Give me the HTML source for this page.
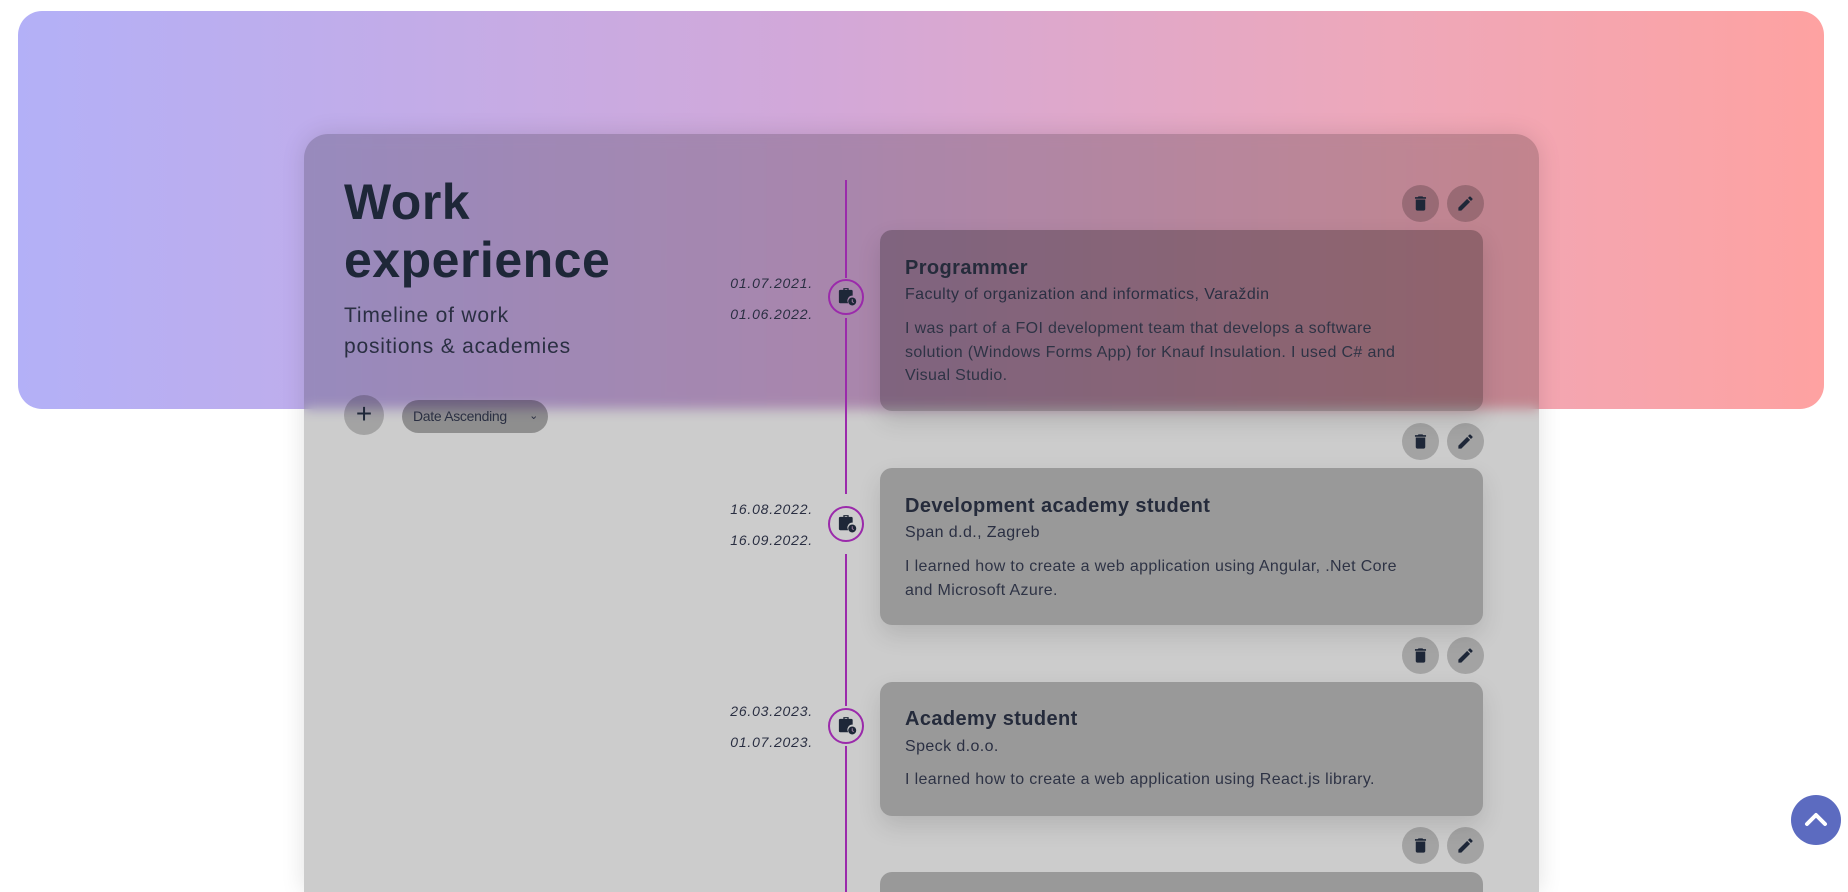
<!DOCTYPE html>
<html><head><meta charset="utf-8">
<style>
*{margin:0;padding:0;box-sizing:border-box}
html,body{width:1848px;height:892px;overflow:hidden;background:#fff;font-family:"Liberation Sans",sans-serif}
.hdr{position:absolute;left:18px;top:11px;width:1806px;height:398px;border-radius:24px;background:linear-gradient(90deg,#b3b0f7 0%,#d3a8d8 45%,#eda8bb 75%,#fea2a1 100%)}
.card{position:absolute;left:304px;top:134px;width:1235px;height:758px;border-radius:24px 24px 0 0;background:rgba(0,0,0,0.2);backdrop-filter:blur(6px);box-shadow:0 0 24px rgba(0,0,0,0.12)}
.abs{position:absolute}
.title{left:344px;top:173px;font-size:50px;line-height:58px;font-weight:700;color:#1e2738;letter-spacing:0.5px}
.sub{left:344px;top:300px;font-size:21px;line-height:31px;color:#2a2f42;letter-spacing:0.8px}
.plus{left:344px;top:395px;width:40px;height:40px;border-radius:50%;background:rgba(0,0,0,0.2);color:#1e2738;font-size:28px;line-height:38px;text-align:center}
.sel{left:402px;top:400px;width:146px;height:33px;border-radius:17px;background:rgba(0,0,0,0.3);color:#2a2f42;font-size:14px;line-height:33px;padding-left:11px;letter-spacing:-0.3px}
.sel span{position:absolute;right:10px;top:0;font-size:11px}
.line{left:845px;width:2px;background:#9b2aab}
.ic{width:36px;height:36px;left:828px;border:2px solid #9b2aab;border-radius:50%}
.date{right:1035px;font-size:14px;font-style:italic;color:#2a2f42;letter-spacing:0.8px;text-align:right}
.it{background:rgba(0,0,0,0.25);border-radius:12px;left:880px;width:603px;box-shadow:0 10px 24px rgba(0,0,0,0.12)}
.btn{width:37px;height:37px;border-radius:50%;background:rgba(0,0,0,0.2)}
.t{left:905px;font-size:20px;font-weight:700;color:#252b3b;letter-spacing:0.4px;white-space:nowrap}
.s{left:905px;font-size:16px;color:#2a2f42;letter-spacing:0.4px;white-space:nowrap}
.d{left:905px;font-size:16px;line-height:23.5px;color:#2e3345;letter-spacing:0.35px;white-space:nowrap}
.up{left:1791px;top:795px;width:50px;height:50px;border-radius:50%;background:#5c6bc0}
</style></head><body>
<div class="hdr"></div>
<div class="card"></div>
<div class="abs title">Work<br>experience</div>
<div class="abs sub">Timeline of work<br>positions &amp; academies</div>
<div class="abs plus">+</div>
<div class="abs sel">Date Ascending<span>&#8964;</span></div>

<div class="abs line" style="top:180px;height:98px"></div>
<div class="abs line" style="top:318px;height:176px"></div>
<div class="abs line" style="top:554px;height:152px"></div>
<div class="abs line" style="top:746px;height:146px"></div>

<svg width="0" height="0" style="position:absolute"><defs>
<symbol id="bc" viewBox="0 0 36 36"><path d="M15 10v-2h6v2h3a1.5 1.5 0 0 1 1.5 1.5v5a5.5 5.5 0 0 0-5 8.5H11.5A1.5 1.5 0 0 1 10 23.5v-12A1.5 1.5 0 0 1 11.5 10zm1.5 0h3V9.2h-3z" fill="#1e2738"/><circle cx="25" cy="23" r="4.5" fill="#1e2738"/><path d="M25 20.5v2.8l1.6 1.2" stroke="#b08aae" stroke-width="1" fill="none"/></symbol>
<symbol id="tr" viewBox="0 0 24 24"><path d="M6 19c0 1.1.9 2 2 2h8c1.1 0 2-.9 2-2V7H6v12zM19 4h-3.5l-1-1h-5l-1 1H5v2h14V4z" fill="#1e2738"/></symbol>
<symbol id="ed" viewBox="0 0 24 24"><path d="M3 17.25V21h3.75L17.81 9.94l-3.750-3.75L3 17.25zM20.71 7.04a1 1 0 0 0 0-1.41l-2.34-2.34a1 1 0 0 0-1.41 0l-1.83 1.83 3.75 3.75 1.83-1.83z" fill="#1e2738"/></symbol>
</defs></svg>

<div class="abs ic" style="top:279px"><svg width="32" height="32" viewBox="0 0 36 36"><use href="#bc"/></svg></div>
<div class="abs date" style="top:275px">01.07.2021.</div>
<div class="abs date" style="top:306px">01.06.2022.</div>
<div class="abs btn" style="left:1402px;top:185px"><svg style="margin:9px" width="19" height="19"><use href="#tr"/></svg></div>
<div class="abs btn" style="left:1447px;top:185px"><svg style="margin:9px" width="19" height="19"><use href="#ed"/></svg></div>
<div class="abs it" style="top:230px;height:181px"></div>
<div class="abs t" style="top:257px">Programmer</div>
<div class="abs s" style="top:286px">Faculty of organization and informatics, Varaždin</div>
<div class="abs d" style="top:317px">I was part of a FOI development team that develops a software<br>solution (Windows Forms App) for Knauf Insulation. I used C# and<br>Visual Studio.</div>

<div class="abs ic" style="top:506px"><svg width="32" height="32" viewBox="0 0 36 36"><use href="#bc"/></svg></div>
<div class="abs date" style="top:501px">16.08.2022.</div>
<div class="abs date" style="top:532px">16.09.2022.</div>
<div class="abs btn" style="left:1402px;top:423px"><svg style="margin:9px" width="19" height="19"><use href="#tr"/></svg></div>
<div class="abs btn" style="left:1447px;top:423px"><svg style="margin:9px" width="19" height="19"><use href="#ed"/></svg></div>
<div class="abs it" style="top:468px;height:157px"></div>
<div class="abs t" style="top:495px">Development academy student</div>
<div class="abs s" style="top:524px">Span d.d., Zagreb</div>
<div class="abs d" style="top:555px">I learned how to create a web application using Angular, .Net Core<br>and Microsoft Azure.</div>

<div class="abs ic" style="top:708px"><svg width="32" height="32" viewBox="0 0 36 36"><use href="#bc"/></svg></div>
<div class="abs date" style="top:703px">26.03.2023.</div>
<div class="abs date" style="top:734px">01.07.2023.</div>
<div class="abs btn" style="left:1402px;top:637px"><svg style="margin:9px" width="19" height="19"><use href="#tr"/></svg></div>
<div class="abs btn" style="left:1447px;top:637px"><svg style="margin:9px" width="19" height="19"><use href="#ed"/></svg></div>
<div class="abs it" style="top:682px;height:134px"></div>
<div class="abs t" style="top:708px">Academy student</div>
<div class="abs s" style="top:738px">Speck d.o.o.</div>
<div class="abs d" style="top:768px">I learned how to create a web application using React.js library.</div>

<div class="abs btn" style="left:1402px;top:827px"><svg style="margin:9px" width="19" height="19"><use href="#tr"/></svg></div>
<div class="abs btn" style="left:1447px;top:827px"><svg style="margin:9px" width="19" height="19"><use href="#ed"/></svg></div>
<div class="abs it" style="top:872px;height:20px;border-radius:12px 12px 0 0;box-shadow:none"></div>

<div class="abs up"><svg width="50" height="50"><path d="M16 29l9-9 9 9" stroke="#fff" stroke-width="4" fill="none" stroke-linecap="round" stroke-linejoin="round"/></svg></div>
</body></html>
